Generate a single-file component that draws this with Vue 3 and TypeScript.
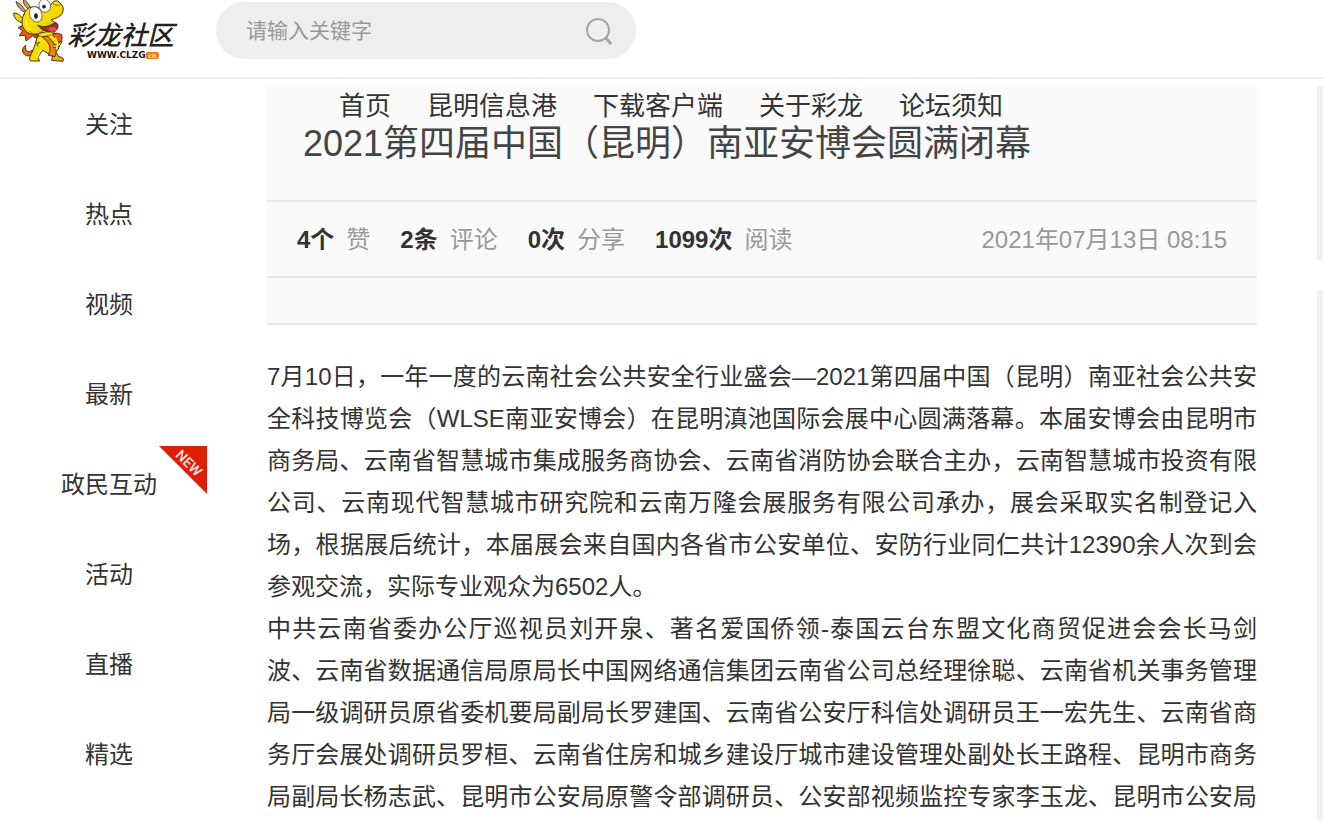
<script setup lang="ts">
interface SideItem {
  label: string
  isNew?: boolean
}

interface Stat {
  value: string
  label: string
}

const sideItems: SideItem[] = [
  { label: '关注' },
  { label: '热点' },
  { label: '视频' },
  { label: '最新' },
  { label: '政民互动', isNew: true },
  { label: '活动' },
  { label: '直播' },
  { label: '精选' },
]

const topLinks: string[] = ['首页', '昆明信息港', '下载客户端', '关于彩龙', '论坛须知']

const stats: Stat[] = [
  { value: '4个', label: '赞' },
  { value: '2条', label: '评论' },
  { value: '0次', label: '分享' },
  { value: '1099次', label: '阅读' },
]

const paragraphs: string[] = [
  '7月10日，一年一度的云南社会公共安全行业盛会—2021第四届中国（昆明）南亚社会公共安全科技博览会（WLSE南亚安博会）在昆明滇池国际会展中心圆满落幕。本届安博会由昆明市商务局、云南省智慧城市集成服务商协会、云南省消防协会联合主办，云南智慧城市投资有限公司、云南现代智慧城市研究院和云南万隆会展服务有限公司承办，展会采取实名制登记入场，根据展后统计，本届展会来自国内各省市公安单位、安防行业同仁共计12390余人次到会参观交流，实际专业观众为6502人。',
  '中共云南省委办公厅巡视员刘开泉、著名爱国侨领-泰国云台东盟文化商贸促进会会长马剑波、云南省数据通信局原局长中国网络通信集团云南省公司总经理徐聪、云南省机关事务管理局一级调研员原省委机要局副局长罗建国、云南省公安厅科信处调研员王一宏先生、云南省商务厅会展处调研员罗桓、云南省住房和城乡建设厅城市建设管理处副处长王路程、昆明市商务局副局长杨志武、昆明市公安局原警令部调研员、公安部视频监控专家李玉龙、昆明市公安局',
]
</script>

<template>
  <div class="page">
    <header class="header">
      <a class="logo" href="#" aria-label="彩龙社区">
        <svg viewBox="0 0 540 192" width="180" height="64" aria-hidden="true">
          <defs>
            <linearGradient id="skin" x1="0" y1="0" x2="1" y2="1">
              <stop offset="0" stop-color="#ffe900" />
              <stop offset="0.6" stop-color="#f4d800" />
              <stop offset="1" stop-color="#f39a12" />
            </linearGradient>
          </defs>
          <g stroke="#4b3205" stroke-width="3" stroke-linejoin="round" stroke-linecap="round">
            <path d="M75 30C67 19 59 9 48 5c4 16 16 27 29 33zM91 22C84 9 77 2 70-3c-1 14 6 25 17 31z" fill="#d5a46a" />
            <path d="M78 72 54 83l14 9-10 15 18-1 2 17 19-15 17 9-5-22z" fill="#f05a16" />
            <path d="M68 56C60 43 50 39 41 39c0 16 12 26 27 30z" fill="#eed900" />
            <path d="M96 151c-13 10-21 3-19-15-10 7-13 20-4 27 9 8 22 5 31-4z" fill="#e9681b" />
            <path d="M116 101c-8 19-12 42-22 61-6 9-7 17-2 21h27l-6-11 15-21 30 17-3 13 34 3c5-8-3-14-12-13l-9-14c19-22 15-47-12-64z" fill="url(#skin)" />
            <path d="M128 112c21 16 28 33 17 54l20 4c10-23-3-45-23-61z" fill="#f08217" />
            <path d="M118 128c-6 6-13-1-9-6M118 128c-8 2-9 9-4 11M162 135c12 0 18-8 16-16l8 3c-1 14-13 21-25 21" fill="#f2da18" />
            <path d="M72 43C78 24 97 14 118 24l35-9c5-14 20-17 27-6 10 7 12 20 7 31-7 11-19 15-33 19l15 12c-5 17-20 22-36 18-11 15-37 18-52 8-16-13-20-34-9-54z" fill="url(#skin)" />
            <path d="M114 76c18 9 38 1 52-9 12 5 10 20-1 27-16 6-39 0-51-18z" fill="#8e3815" />
            <path d="M143 87c11-8 21-7 28-1-5 11-18 13-28 1z" fill="#f04361" stroke="none" />
            <path d="M158 102c4 11 12 19 22 26 6-7 8-15 5-24l-12-4z" fill="#f05b1c" />
            <path d="M104 101c15 11 31 11 49 4M90 94c8 11 18 15 28 15M158 9c6 7 14 9 22 5" fill="none" stroke-width="2" />
          </g>
          <g stroke="#444" stroke-width="2">
            <ellipse cx="107" cy="43" rx="18" ry="24" fill="#fff" transform="rotate(-24 107 43)" />
            <ellipse cx="134" cy="17" rx="17" ry="20" fill="#fff" transform="rotate(-20 134 17)" />
            <ellipse cx="108" cy="48" rx="5" ry="8" fill="#222" />
            <circle cx="132" cy="20" r="5" fill="#222" />
          </g>
          <path d="M79 61c-1 14 3 23 12 30M122 151l-12 22M165 112c9 12 10 24 3 37" fill="none" stroke="#fff46b" stroke-width="4" />
          <text class="brand" x="202" y="134" fill="#222">彩龙社区</text>
          <text class="domain" x="261" y="175" fill="#161616">WWW.CLZG</text>
          <rect x="437" y="156" width="40" height="21" rx="6" fill="#f57c13" />
          <text class="suffix" x="444" y="173" fill="#ffe1b5">cn</text>
        </svg>
      </a>
      <form class="search" @submit.prevent>
        <input type="search" aria-label="搜索" placeholder="请输入关键字" />
        <button type="submit" aria-label="搜索">
          <svg viewBox="0 0 28 28" width="28" height="28" fill="none" stroke="#a6a6a6" stroke-width="2">
            <circle cx="13" cy="13" r="11" />
            <path d="m21 21 5 6" stroke-width="3" />
          </svg>
        </button>
      </form>
      <nav class="top-links" aria-label="站点导航">
        <a v-for="link in topLinks" :key="link" href="#">{{ link }}</a>
      </nav>
    </header>

    <div class="columns">
      <nav class="side" aria-label="栏目">
        <a v-for="item in sideItems" :key="item.label" href="#">
          {{ item.label }}
          <svg v-if="item.isNew" class="ribbon" viewBox="0 0 48 48" width="48" height="48">
            <path d="M0 0h48v48z" fill="#dc1f06" />
            <text x="30" y="22" text-anchor="middle" transform="rotate(45 30 17)" fill="#fbe4e0">NEW</text>
          </svg>
        </a>
      </nav>

      <main class="article">
        <div class="article-head">
          <h1>2021第四届中国（昆明）南亚安博会圆满闭幕</h1>
          <div class="meta">
            <span v-for="stat in stats" :key="stat.label" class="stat">
              <strong>{{ stat.value }}</strong>
              <span>{{ stat.label }}</span>
            </span>
            <time datetime="2021-07-13T08:15">2021年07月13日 08:15</time>
          </div>
          <div class="tags"></div>
        </div>
        <div class="content">
          <p v-for="(paragraph, index) in paragraphs" :key="index">{{ paragraph }}</p>
        </div>
      </main>

      <aside class="rail">
        <div class="panel"></div>
        <div class="panel panel-fill"></div>
      </aside>
    </div>
  </div>
</template>

<style>
body {
  margin: 0;
  background: #fff;
}
</style>

<style scoped>
.page {
  display: flex;
  flex-direction: column;
  min-height: 100vh;
  font-family: "Liberation Sans", "Noto Sans CJK SC", sans-serif;
  font-size: 24px;
  color: #333;
}

a {
  color: inherit;
  text-decoration: none;
}

.header {
  position: relative;
  display: flex;
  align-items: flex-start;
  gap: 36px;
  height: 77px;
  border-bottom: 2px solid #eee;
}

.logo svg {
  display: block;
}

.brand {
  font: italic 500 80px "Liberation Sans", "Noto Sans CJK SC", sans-serif;
}

.domain {
  font: bold 27px "DejaVu Sans", sans-serif;
}

.suffix {
  font: bold 19px "DejaVu Sans", sans-serif;
}

.search {
  display: flex;
  align-items: center;
  box-sizing: border-box;
  width: 420px;
  height: 57px;
  margin-top: 2px;
  padding: 0 23px 0 30px;
  border-radius: 29px;
  background: #eee;
}

.search input {
  flex: 1;
  min-width: 0;
  padding: 0;
  border: 0;
  outline: 0;
  background: none;
  font: inherit;
  font-size: 21px;
  color: #333;
}

.search input::placeholder {
  color: #999;
  opacity: 1;
}

.search button {
  padding: 0;
  border: 0;
  background: none;
}

.search button svg {
  display: block;
}

.top-links {
  position: absolute;
  top: 87px;
  left: 339px;
  display: flex;
  gap: 36px;
  font-size: 26px;
  line-height: 38px;
  white-space: nowrap;
}

.columns {
  flex: 1;
  display: grid;
  grid-template-columns: 207px minmax(0, 1fr) 6px;
  column-gap: 60px;
}

.side {
  padding-top: 1px;
}

.side a {
  position: relative;
  display: block;
  padding-left: 11px;
  line-height: 90px;
  text-align: center;
}

.ribbon {
  position: absolute;
  top: 6px;
  right: 0;
  overflow: visible;
}

.ribbon text {
  font: 500 14px Roboto, sans-serif;
}

.article {
  padding-top: 7px;
}

.article-head {
  background: #fafafa;
}

h1 {
  margin: 0;
  padding: 31px 36px 29px;
  font-size: 36px;
  font-weight: 400;
  line-height: 54px;
  color: #444;
  border-bottom: 2px solid #e8e8e8;
}

.meta {
  display: flex;
  align-items: center;
  gap: 30px;
  padding: 2px 30px 0;
  line-height: 72px;
  color: #999;
  border-bottom: 2px solid #e8e8e8;
}

.stat {
  display: flex;
  gap: 12px;
}

.stat strong {
  color: #333;
}

.meta time {
  margin-left: auto;
}

.tags {
  height: 45px;
  border-bottom: 2px solid #e8e8e8;
}

.content {
  padding-top: 31px;
  line-height: 42px;
  text-align: justify;
}

.content p {
  margin: 0;
}

.content p:last-child {
  text-align-last: justify;
}

.rail {
  display: flex;
  flex-direction: column;
  gap: 30px;
  padding-top: 7px;
}

.panel {
  height: 174px;
  background: #ebf1f5;
}

.panel-fill {
  flex: 1;
  height: auto;
}
</style>
